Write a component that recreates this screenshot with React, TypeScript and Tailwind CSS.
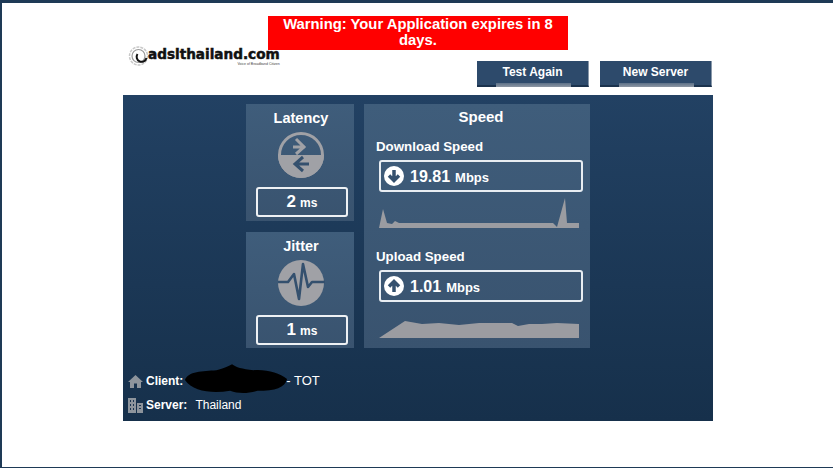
import React from "react";

const font = { fontFamily: '"Liberation Sans", Arial, sans-serif' };

function LatencyIcon() {
  return (
    <svg width="48" height="48" viewBox="0 0 48 48" className="block">
      <circle cx="24" cy="24" r="21.500" fill="none" stroke="#a0a1a6" strokeWidth="3" />
      <path d="M1 24a23 23 0 0 0 46 0z" fill="#a0a1a6" />
      <path d="M16 16h12M19 8l8 8-8 7" fill="none" stroke="#a0a1a6" strokeWidth="3" />
      <path d="M32 33H19M26 26l-8 7 8 7" fill="none" stroke="#34506e" strokeWidth="3" />
    </svg>
  );
}

function JitterIcon() {
  return (
    <svg width="48" height="48" viewBox="0 0 48 48" className="block">
      <circle cx="24" cy="24" r="23" fill="#a0a1a6" />
      <path
        d="M1 23h10l6-8 5 25 4-35 5 23 4-5h13"
        fill="none"
        stroke="#34506e"
        strokeWidth="2.600"
        strokeLinejoin="round"
      />
    </svg>
  );
}

function ArrowBadge({ up }: { up?: boolean }) {
  return (
    <svg width="20" height="20" viewBox="0 0 20 20" className="block shrink-0">
      <circle cx="10" cy="10" r="10" fill="#fff" />
      <path
        d={up ? "M10 16V6M5 10.500l5-5 5 5" : "M10 4v10M5 9.500l5 5 5-5"}
        fill="none"
        stroke="#34506e"
        strokeWidth="3.500"
      />
    </svg>
  );
}

function Logo() {
  return (
    <div className="flex items-center h-[24px] ml-[5px]">
      <svg width="20" height="20" viewBox="0 0 19 20" className="block shrink-0">
        <circle cx="10" cy="10" r="9" fill="none" stroke="#c8c8c8" strokeWidth="1.500" strokeDasharray="3 1" />
        <circle cx="10" cy="10" r="6.500" fill="none" stroke="#9a9a9a" strokeWidth="1.200" />
        <path d="M9 8a5 5 0 1 0 9 4" fill="none" stroke="#111" strokeWidth="2" />
      </svg>
      <div className="flex flex-col items-end">
        <span
          className="text-[13.600px] leading-[15px] font-bold text-[#111]"
          style={{ fontFamily: '"DejaVu Sans", sans-serif', WebkitTextStroke: "0.5px #111" }}
        >
          adslthailand.com
        </span>
        <span className="text-[3.500px] leading-[4px] text-[#444]">Voice of Broadband Citizen</span>
      </div>
    </div>
  );
}

function Btn({ children }: { children: React.ReactNode }) {
  return (
    <div className="relative w-[112px] h-[26px] bg-[#2d4a6b] border-b-2 border-[#1b324d] border-r border-r-[#8a99aa] text-white font-bold text-[12px] leading-[23px] text-center">
      {children}
      <div className="absolute left-[19px] bottom-[-2px] w-[75px] h-[4px] bg-gradient-to-b from-[#5c7087] to-[#8d97a4]" />
    </div>
  );
}

function Small({
  title,
  icon,
  value,
  h,
}: {
  title: string;
  icon: React.ReactNode;
  value: string;
  h: string;
}) {
  return (
    <div className={`w-[108px] ${h} bg-gradient-to-b from-[#3f5d7b] to-[#39536f] flex flex-col items-center pt-[5px] pl-[2px]`}>
      <div className="text-white font-bold text-[14.500px] leading-[18px]">{title}</div>
      <div className="mt-[4px]">{icon}</div>
      <div className="mt-[8px] ml-[2px] w-[92px] h-[30px] rounded-[3px] border-2 border-[#eef1f4] flex items-center justify-center text-white font-bold">
        <span className="text-[17px] leading-[26px]">{value}</span>
        <span className="text-[12px] ml-[4px] leading-[26px] mt-[2px]">ms</span>
      </div>
    </div>
  );
}

export default function App() {
  return (
    <div
      className="w-[833px] h-[468px] bg-white border-t-[3px] border-l-[2px] border-b-[1px] border-[#1e3a56] pl-[121px]"
      style={font}
    >
      <div className="w-[590px]">
        <div className="flex justify-center pt-[13px]">
          <div className="w-[300px] h-[34px] bg-[#ff0000] text-white font-bold text-[14.800px] leading-[16px] text-center px-[10px]">
            Warning: Your Application expires in 8 days.
          </div>
        </div>
        <div className="flex justify-between h-[45px]">
          <div className="-mt-[6px]">
            <Logo />
          </div>
          <div className="flex gap-[11px] pt-[11px] pr-px">
            <Btn>Test Again</Btn>
            <Btn>New Server</Btn>
          </div>
        </div>
        <div className="h-[326px] bg-gradient-to-b from-[#224163] to-[#16304b] pt-[9px] pl-[123px]">
          <div className="flex gap-[10px]">
            <div className="flex flex-col gap-[11px]">
              <Small title="Latency" icon={<LatencyIcon />} value="2" h="h-[117px]" />
              <Small title="Jitter" icon={<JitterIcon />} value="1" h="h-[116px]" />
            </div>
            <div className="w-[226px] h-[244px] bg-gradient-to-b from-[#3f5d7b] to-[#39536f] pt-[4px] text-white font-bold">
              <div className="text-center text-[15px] leading-[17px] pl-[8px]">Speed</div>
              <div className="mt-[14px] ml-[12px] text-[13.300px] leading-[16px]">Download Speed</div>
              <div className="mt-[5px] ml-[15px] w-[204px] h-[32px] rounded-[3px] border-2 border-[#e8edf2] flex items-center pl-[3px]">
                <ArrowBadge />
                <span className="text-[16px] ml-[6px] mt-[2px]">19.81</span>
                <span className="text-[13px] ml-[5px] mt-[4px]">Mbps</span>
              </div>
              <svg width="200" height="32" viewBox="0 0 200 32" className="block ml-[15px] mt-[5px]">
                <path
                  d="M0 31L4 12 8 26 13 27 16 24 20 26 74 26 174 26 178 30 186 1 188 26 200 26V31Z"
                  fill="#9b9ca1"
                />
              </svg>
              <div className="mt-[20px] ml-[12px] text-[13.300px] leading-[16px]">Upload Speed</div>
              <div className="mt-[5px] ml-[15px] w-[204px] h-[32px] rounded-[3px] border-2 border-[#e8edf2] flex items-center pl-[3px]">
                <ArrowBadge up />
                <span className="text-[16px] ml-[6px] mt-[2px]">1.01</span>
                <span className="text-[13px] ml-[5px] mt-[4px]">Mbps</span>
              </div>
              <svg width="200" height="18" viewBox="0 0 200 18" className="block ml-[15px] mt-[18px]">
                <path
                  d="M0 18L26 1 43 4 60 3 80 5 100 3 133 3 139 6 150 4 163 4 178 3 200 4V18Z"
                  fill="#9b9ca1"
                />
              </svg>
            </div>
          </div>
          <div className="-ml-[118px] mt-[25px] text-[12px] leading-[16px] text-white">
            <div className="relative flex items-center h-[16px]">
              <svg width="15" height="13" viewBox="0 0 15 13" className="block shrink-0 mr-[3px]">
                <path d="M7.500 0L15 7h-2v6H9V8.500H6V13H2V7H0z" fill="#8d949c" />
              </svg>
              <span className="font-bold">Client:</span>
              <span className="ml-[103px] text-[13px]">- TOT</span>
              <svg
                width="106"
                height="32"
                viewBox="0 0 108 32"
                className="absolute left-[55px] top-[-10px]"
              >
                <path
                  d="M2 17C5 8 20 8 34 7 42 5 46 3 50 1 54 4 60 6 72 7 86 6 98 10 106 16 104 25 94 28 76 28 66 31 56 31 48 28 30 31 10 29 2 17Z"
                  fill="#000"
                />
              </svg>
            </div>
            <div className="flex items-center h-[16px] mt-[8px]">
              <svg width="15" height="15" viewBox="0 0 15 15" className="block shrink-0 mr-[3px]">
                <path d="M0 0h8v15H0zM9 5h6v10H9z" fill="#8d949c" />
                <path
                  d="M2 2h1v2H2zM5 2h1v2H5zM2 6h1v2H2zM5 6h1v2H5zM2 10h1v2H2zM5 10h1v2H5zM11 7h2v1h-2zM11 10h2v1h-2z"
                  fill="#1a344f"
                />
              </svg>
              <span className="font-bold">Server:</span>
              <span className="ml-[8px]">Thailand</span>
            </div>
          </div>
        </div>
      </div>
    </div>
  );
}
